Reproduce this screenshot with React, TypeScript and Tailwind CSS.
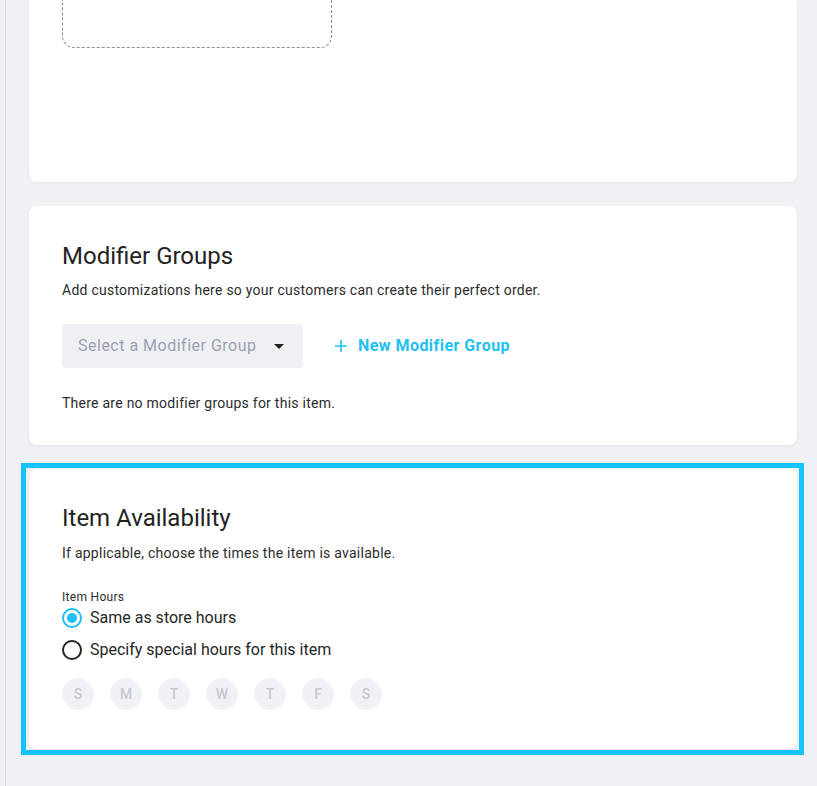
import { useState } from "react";

const days = ["S", "M", "T", "W", "T", "F", "S"];

function Radio({ checked, label, onClick }: { checked: boolean; label: string; onClick: () => void }) {
  return (
    <button type="button" onClick={onClick} className="flex items-center h-6 gap-[8px] text-left">
      <span
        className={
          checked
            ? "flex items-center justify-center w-5 h-5 rounded-full border-2 border-[#1dbff5]"
            : "flex items-center justify-center w-5 h-5 rounded-full border-2 border-[#222]"
        }
      >
        {checked && <span className="w-[10px] h-[10px] rounded-full bg-[#1dbff5]" />}
      </span>
      <span className="text-[16px] text-[#262626]">{label}</span>
    </button>
  );
}

export default function App() {
  const [hours, setHours] = useState<"store" | "special">("store");

  return (
    <div
      className="min-h-[786px] bg-[#f0f1f5] pl-[5px]"
      style={{ fontFamily: "Roboto, 'Liberation Sans', sans-serif" }}
    >
      <div className="min-h-[786px] border-l border-[#dcdde3] pb-8">
        {/* Photo upload card (scrolled past its top) */}
        <div className="ml-[23px] w-[768px] h-[182px] bg-white rounded-b-lg shadow-[0_1px_3px_rgba(0,0,0,0.07)] pl-[33px]">
          <div className="w-[270px] h-[48px] border border-t-0 border-dashed border-[#8c8ca6] rounded-b-xl" />
        </div>

        {/* Modifier groups */}
        <div className="ml-[23px] mt-6 w-[768px] bg-white rounded-lg shadow-[0_1px_3px_rgba(0,0,0,0.07)] pl-[33px] pt-[34px] pb-8">
          <h2 className="text-[24px] leading-8 text-[#232323]">Modifier Groups</h2>
          <p className="mt-2 text-[14px] leading-5 tracking-[0.25px] text-[#2c2c2c]">
            Add customizations here so your customers can create their perfect order.
          </p>
          <div className="mt-6 flex items-center">
            <div className="flex items-center justify-between w-[241px] h-11 rounded bg-[#eff0f4] pl-4 pr-[19px]">
              <span className="text-[16px] tracking-[0.5px] text-[#9da0b0]">Select a Modifier Group</span>
              <svg width="10" height="5" viewBox="0 0 10 5">
                <path d="M0 0h10L5 5z" fill="#222" />
              </svg>
            </div>
            <button
              type="button"
              className="ml-[31px] flex items-center text-[#1fbff4] text-[16px] tracking-[0.45px] font-bold"
            >
              <svg width="12" height="12" viewBox="0 0 12 12" className="ml-px mr-[11px]">
                <path d="M6 0v12M0 6h12" stroke="#1fbff4" strokeWidth="1.6" />
              </svg>
              New Modifier Group
            </button>
          </div>
          <p className="mt-[25px] text-[14px] leading-5 tracking-[0.25px] text-[#2c2c2c]">
            There are no modifier groups for this item.
          </p>
        </div>

        {/* Item availability, focused */}
        <div className="ml-[15px] mt-[18px] w-[783px] border-[5px] border-[#15c4fb] pl-[3px] pr-[2px] py-px">
          <div className="bg-white rounded-lg shadow-[0_1px_3px_rgba(0,0,0,0.07)] pl-[33px] pt-[33px] pb-[39px]">
            <h2 className="text-[24px] leading-8 text-[#232323]">Item Availability</h2>
            <p className="mt-[9px] text-[14px] leading-5 tracking-[0.25px] text-[#2c2c2c]">
              If applicable, choose the times the item is available.
            </p>
            <p className="mt-[26px] text-[12px] leading-4 tracking-[0.3px] text-[#2c2c2c]">Item Hours</p>
            <div className="mt-px flex flex-col gap-2">
              <Radio checked={hours === "store"} label="Same as store hours" onClick={() => setHours("store")} />
              <Radio
                checked={hours === "special"}
                label="Specify special hours for this item"
                onClick={() => setHours("special")}
              />
            </div>
            <div className="mt-4 flex gap-4">
              {days.map((d, i) => (
                <span
                  key={i}
                  className="flex items-center justify-center w-8 h-8 rounded-full bg-[#f0f1f5] text-[14px] font-medium text-[#c6c8d2]"
                >
                  {d}
                </span>
              ))}
            </div>
          </div>
        </div>
      </div>
    </div>
  );
}
